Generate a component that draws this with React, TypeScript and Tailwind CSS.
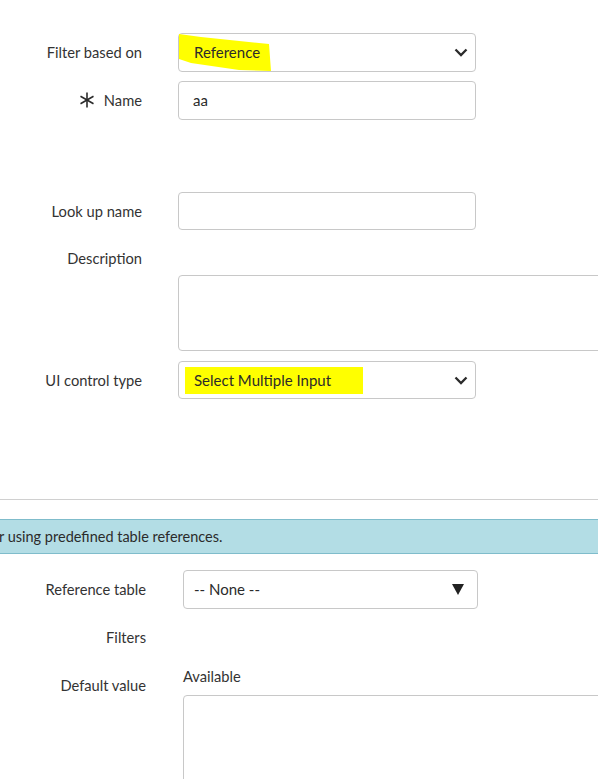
import { ReactNode } from "react"

function Chevron() {
    return (
        <svg width="14" height="9" viewBox="0 0 14 9" className="shrink-0">
            <polyline points="1.5,1.5 7,7 12.5,1.5" fill="none" stroke="#2b2b2b" strokeWidth="2.3" strokeLinejoin="miter" />
        </svg>
    )
}

function Asterisk() {
    return (
        <svg width="16" height="16" viewBox="0 0 16 16" className="shrink-0">
            <g stroke="#2b2b2b" strokeWidth="1.6" strokeLinecap="butt">
                <line x1="8" y1="0.5" x2="8" y2="15.5" />
                <line x1="1.5" y1="4.2" x2="14.5" y2="11.8" />
                <line x1="1.5" y1="11.8" x2="14.5" y2="4.2" />
            </g>
        </svg>
    )
}

function Row({ label, children, className = "" }: { label: ReactNode; children?: ReactNode; className?: string }) {
    return (
        <div className={`flex items-center ${className}`}>
            <div className="w-[142px] shrink-0 flex justify-end items-center text-[14.7px] text-[#333]">{label}</div>
            <div className="ml-[36px]">{children}</div>
        </div>
    )
}

function Row2({ label, children, className = "" }: { label: ReactNode; children?: ReactNode; className?: string }) {
    return (
        <div className={`flex items-center ${className}`}>
            <div className="w-[146px] shrink-0 text-right text-[14.7px] text-[#333]">{label}</div>
            <div className="ml-[37px]">{children}</div>
        </div>
    )
}

export default function App() {
    return (
        <div className="w-[598px] h-[779px] overflow-hidden bg-white text-[#333]" style={{ fontFamily: "Lato, 'Open Sans', sans-serif" }}>
            <div className="pt-[33px]">
                <Row label="Filter based on">
                    <div className="relative w-[298px] h-[39px] border border-[#c8c8c8] rounded-[4px] flex items-center justify-between pl-[15px] pr-[7px]">
                        <svg className="absolute left-0 top-0" width="100" height="40" viewBox="0 0 100 40">
                            <polygon points="0,0 22,3 90,10 92,37 60,36 12,29 0,25" fill="#ffff00" />
                        </svg>
                        <span className="relative text-[15px] text-[#2b2b2b]">Reference</span>
                        <Chevron />
                    </div>
                </Row>
                <Row
                    className="mt-[9px]"
                    label={
                        <span className="flex items-center gap-[9px]">
                            <Asterisk />
                            <span>Name</span>
                        </span>
                    }
                >
                    <div className="w-[298px] h-[39px] border border-[#c8c8c8] rounded-[4px] flex items-center pl-[14px] text-[15px] text-[#2b2b2b]">aa</div>
                </Row>
                <Row className="mt-[72px]" label="Look up name">
                    <div className="w-[298px] h-[38px] border border-[#c8c8c8] rounded-[4px]" />
                </Row>
                <Row className="mt-[18px] h-[20px]" label="Description" />
                <div className="mt-[7px] ml-[178px] w-[440px] h-[76px] border border-[#c8c8c8] rounded-[4px]" />
                <Row className="mt-[10px]" label="UI control type">
                    <div className="relative w-[298px] h-[38px] border border-[#c8c8c8] rounded-[4px] flex items-center justify-between pl-[15px] pr-[7px]">
                        <div className="absolute left-[6px] top-[5px] w-[178px] h-[27px] bg-[#ffff00]" />
                        <span className="relative text-[15px] text-[#2b2b2b]">Select Multiple Input</span>
                        <Chevron />
                    </div>
                </Row>
            </div>

            <div className="mt-[100px] border-t border-[#d0d0d0]" />

            <div className="mt-[19px] h-[35px] bg-[#b3dde5] border-y border-[#7fbccb] flex items-center text-[14.5px] text-[#2b2b2b]">
                <span className="-ml-[1px]">r using predefined table references.</span>
            </div>

            <Row2 className="mt-[16px]" label="Reference table">
                <div className="w-[295px] h-[39px] border border-[#c8c8c8] rounded-[4px] flex items-center justify-between pl-[10px] pr-[13px] text-[15px] text-[#2b2b2b]">
                    <span>-- None --</span>
                    <svg width="12" height="11" viewBox="0 0 12 11">
                        <polygon points="0,0 12,0 6,11" fill="#222" />
                    </svg>
                </div>
            </Row2>
            <Row2 className="mt-[17px]" label="Filters" />
            <div className="mt-[17px] flex">
                <div className="w-[146px] shrink-0 text-right text-[14.7px] text-[#333] pt-[9px]">Default value</div>
                <div className="ml-[37px]">
                    <div className="text-[14.7px] text-[#333]">Available</div>
                    <div className="mt-[8px] w-[440px] h-[120px] border border-[#c8c8c8] rounded-[4px]" />
                </div>
            </div>
        </div>
    )
}
